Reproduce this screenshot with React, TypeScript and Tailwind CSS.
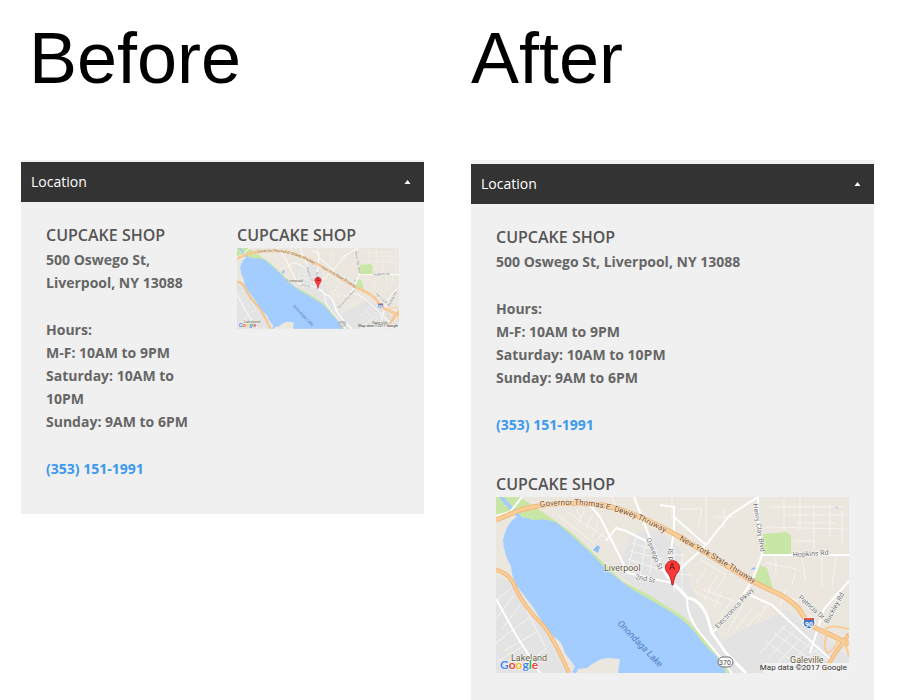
import { useId, useState, type ReactNode } from "react";

function StreetMap() {
  const id = useId();
  const governor = `${id}-governor`;
  const newYork = `${id}-newyork`;

  return (
    <svg
      viewBox="0 0 353 176"
      className="block w-full overflow-hidden"
      role="img"
      aria-label="Map of Liverpool, NY"
    >
      <defs>
        <path id={governor} d="M44 10 C70 7 90 7 110 12 S145 23 170 36" />
        <path id={newYork} d="M183 43 L224 66 L262 89" />
      </defs>

      <rect width="353" height="176" fill="#ebe7de" />

      {/* built-up areas */}
      <path
        d="M0 80 Q14 82 24 95 L47 128 L75 176 H0 Z"
        fill="#e3e3e3"
      />
      <path
        d="M134 38 L162 32 L184 52 L196 92 L214 120 L226 144 L248 132 L264 126 L290 113 L344 152 L353 160 V176 H226 L190 128 L118 74 L128 58 Z"
        fill="#e3e3e3"
      />

      {/* parks */}
      <path
        d="M0 0 H24 L48 16 L75 35 L110 68 L126 84 L153 98 L188 120 L210 144 L234 176 H222 L176 122 L120 88 L70 42 L40 24 L16 17 L0 20 Z"
        fill="#c8e6a5"
      />
      <path d="M267 37 L291 35 L295 39 V58 H267 Z" fill="#c8e6a5" />
      <path d="M264 68 L271 71 L277 92 L258 83 Z" fill="#c8e6a5" />

      {/* lake */}
      <path
        d="M19 21 Q10 28 7 43 Q8 58 15 69 Q16 84 24 93 L37 110 L47 126 L58 140 Q66 144 69 156 L81 172 L91 171 Q104 160 113 161 L124 162 L122 176 H230 L224 163 L207 146 L197 133 L184 121 L170 112 L151 101 L137 93 L121 81 L109 71 L94 55 L74 37 L61 26 Q51 21 37 23 Q28 19 19 21 Z"
        fill="#a3ccff"
      />
      <path d="M5 0 L25 22 M78 176 L81 170" stroke="#a3ccff" strokeWidth="4" />
      <path d="M97 53 L99 51 L101 48 L104 50 L102 56 Z" fill="#8fc0fa" />
      <path d="M254 73 L258 70 L261 72 Z M338 10 L341 9 L342 12 Z" fill="#8fc0fa" />

      {/* minor streets */}
      <g fill="none" stroke="#f6f4ef" strokeWidth="1">
        <path d="M62 18 L98 46 M70 14 L112 42 M80 12 L86 22 M88 14 L82 26 M96 18 L90 32 M103 24 L96 40 M108 34 L100 45 M116 0 L124 18 M176 0 V22 M184 12 H206 L202 30 M210 0 V38 M218 20 H240 M228 12 V32" />
        <path d="M136 46 L162 54 M134 54 L166 62 M132 62 L168 74 M140 40 L132 72 M150 44 L144 80 M158 48 L154 76 M172 58 H190 M170 66 H192 M174 76 L196 78 M178 52 V96 M186 56 V98" />
        <path d="M274 10 H348 M290 18 H350 M300 26 H340 M288 2 V32 M304 0 V34 M318 8 V44 M334 8 V40 M346 14 V48 M270 30 L350 32 M298 44 H318 V52 M204 62 L230 78 L218 96 M210 72 L200 86 M222 78 L212 94 M270 66 L300 72 L296 88 M280 60 V76 M306 62 L310 84 M326 60 V90 M340 60 L336 90" />
        <path d="M198 94 L226 108 M206 92 L238 104 M214 92 L208 104 M226 94 L218 110 M238 100 L224 120 M248 106 L232 134 M256 112 L240 132 M264 116 L250 130 M272 106 L262 124 M280 96 L302 104 M290 92 L284 108" />
        <path d="M264 156 L290 128 M272 162 L298 134 M280 168 L306 140 M288 172 L314 146 M296 174 L322 152 M270 144 L312 176 M278 136 L322 168 M286 130 L330 162" />
        <path d="M0 122 L18 98 M6 132 L24 108 M0 146 L34 120 M8 154 L42 134 M2 164 L26 150 M0 104 L14 92 M28 108 L50 152 L26 170" />
      </g>

      {/* main streets */}
      <g fill="none" stroke="#ffffff" strokeWidth="2" strokeLinejoin="round">
        <path d="M0 19 L14 15 L26 0 M94 8 L104 20 L126 64 L132 76 L176 86" />
        <path d="M110 44 L120 31 L130 34 L154 46 M138 0 L152 36 L158 54 L170 78 L178 88" />
        <path d="M164 8 L178 10 V34 L174 60 L177 84 M178 20 L210 48 M262 0 L234 18 L210 48 L180 76" />
        <path d="M262 0 V20 L266 58 L256 84 L236 114 L216 136" />
        <path d="M266 58 H353 M353 84 L328 112 L314 156 M254 98 L276 108 L334 162" />
        <path d="M176 86 Q188 96 191 101 Q205 102 212 122 L216 136 L230 156 L250 176" strokeWidth="3" />
        <path d="M191 101 Q190 118 204 136 L224 160 L236 176" />
        <path d="M0 102 L20 138 L44 176" />
      </g>

      {/* highways */}
      <g fill="none" strokeLinejoin="round">
        <g stroke="#f0b67a" strokeWidth="5">
          <path d="M0 23 L24 13 Q60 3 107 8 Q138 14 184 40 L254 83 L274 93 Q292 100 303 112 Q312 130 331 136 L353 147" />
          <path d="M0 73 Q14 76 20 92 Q28 110 46 127 Q56 138 73 176 M353 137 L338 158 L328 176" strokeWidth="4" />
        </g>
        <g stroke="#fbcf97" strokeWidth="3">
          <path d="M0 23 L24 13 Q60 3 107 8 Q138 14 184 40 L254 83 L274 93 Q292 100 303 112 Q312 130 331 136 L353 147" />
          <path d="M0 73 Q14 76 20 92 Q28 110 46 127 Q56 138 73 176 M353 137 L338 158 L328 176" strokeWidth="2" />
        </g>
        <path
          d="M331 136 Q326 128 344 130 L353 132 M331 136 Q326 152 332 156 Q344 148 341 140 Q352 148 353 160"
          stroke="#f9cd96"
          strokeWidth="2"
        />
      </g>

      {/* road names */}
      <g
        className="font-['Roboto',sans-serif] text-[8px]"
        fill="#74451b"
        stroke="#fff3df"
        strokeWidth="1"
        paintOrder="stroke"
      >
        <text>
          <textPath href={`#${governor}`}>Governor Thomas E. Dewey Thruway</textPath>
        </text>
        <text>
          <textPath href={`#${newYork}`}>New York State Thruway</textPath>
        </text>
      </g>
      <g
        className="font-['Roboto',sans-serif] text-[7px]"
        fill="#6e6e6e"
        stroke="#ffffff"
        strokeWidth="1"
        paintOrder="stroke"
      >
        <text transform="translate(257 7) rotate(81)">Henry Clay Blvd</text>
        <text transform="translate(297 60) rotate(-3)">Hopkins Rd</text>
        <text transform="translate(150 42) rotate(68)">Oswego St</text>
        <text transform="translate(176 70) rotate(-86)">3rd St</text>
        <text transform="translate(139 82) rotate(12)">2nd St</text>
        <text transform="translate(222 132) rotate(-47)">Electronics Pkwy</text>
        <text transform="translate(302 101) rotate(42)">Patricia Dr</text>
        <text transform="translate(332 127) rotate(-61)">Buckley Rd</text>
      </g>

      {/* place names */}
      <text
        transform="translate(121 127) rotate(46)"
        className="font-['Roboto',sans-serif] text-[9px] italic"
        fill="#4f7fc4"
      >
        Onondaga Lake
      </text>
      <g
        className="font-['Roboto',sans-serif] text-[9px]"
        fill="#5d5436"
        stroke="#ffffff"
        strokeWidth="1"
        paintOrder="stroke"
      >
        <text x="108" y="74">Liverpool</text>
        <text x="15" y="164">Lakeland</text>
        <text x="294" y="166">Galeville</text>
      </g>

      {/* route shields */}
      <rect x="222" y="160" width="15" height="10" rx="5" fill="#ffffff" stroke="#6c6c6c" />
      <text
        x="229"
        y="168"
        textAnchor="middle"
        className="font-['Roboto',sans-serif] text-[7px]"
        fill="#444444"
      >
        370
      </text>
      <path
        d="M308 121 H318 Q320 127 318 129 Q316 131 313 132 Q310 131 308 129 Q306 127 308 121 Z"
        fill="#4478c4"
        stroke="#ffffff"
        strokeWidth="1"
      />
      <path d="M308 121 H318 V123 H308 Z" fill="#d9534a" />
      <text
        x="313"
        y="130"
        textAnchor="middle"
        className="font-['Roboto',sans-serif] text-[7px] font-bold"
        fill="#ffffff"
      >
        90
      </text>

      {/* marker */}
      <path
        d="M176 88 Q175 79 171 75 A7 7 0 1 1 182 75 Q178 79 177 88 Z"
        fill="#fb3b3b"
        stroke="#c4161c"
        strokeWidth="1"
      />
      <text
        x="176"
        y="73"
        textAnchor="middle"
        className="font-['Roboto',sans-serif] text-[9px]"
        fill="#5b0b0b"
      >
        A
      </text>

      {/* attribution */}
      <text
        x="4"
        y="172"
        className="font-['Lato',sans-serif] text-[12px] font-bold"
        stroke="#ffffff"
        strokeWidth="1"
        paintOrder="stroke"
      >
        <tspan fill="#4285f4">G</tspan>
        <tspan fill="#ea4335">o</tspan>
        <tspan fill="#fbbc05">o</tspan>
        <tspan fill="#4285f4">g</tspan>
        <tspan fill="#34a853">l</tspan>
        <tspan fill="#ea4335">e</tspan>
      </text>
      <rect x="267" y="166" width="86" height="10" fill="#f5f5f5" fillOpacity="0.8" />
      <text
        x="351"
        y="173"
        textAnchor="end"
        className="font-['Roboto',sans-serif] text-[8px]"
        fill="#333333"
      >
        Map data ©2017 Google
      </text>
    </svg>
  );
}

function ShopDetails() {
  return (
    <section>
      <ShopTitle />
      <div className="flex flex-col gap-6 text-sm/[23px] font-bold text-[#666666]">
        <p>500 Oswego St, Liverpool, NY 13088</p>
        <div>
          <p>Hours:</p>
          <p>M-F: 10AM to 9PM</p>
          <p>Saturday: 10AM to 10PM</p>
          <p>Sunday: 9AM to 6PM</p>
        </div>
        <a href="tel:3531511991" className="text-[#3b99ef]">
          (353) 151-1991
        </a>
      </div>
    </section>
  );
}

function ShopTitle() {
  return (
    <h2 className="mb-px text-base/6 font-semibold text-[#555555]">
      CUPCAKE SHOP
    </h2>
  );
}

function LocationPanel({ children }: { children: ReactNode }) {
  const [open, setOpen] = useState(true);

  return (
    <>
      <button
        type="button"
        aria-expanded={open}
        onClick={() => setOpen(!open)}
        className="flex h-10 w-full items-center justify-between bg-[#333333] pr-[13px] pl-2.5 text-sm text-white"
      >
        Location
        <svg
          viewBox="0 0 7 4"
          className={open ? "h-1 w-[7px]" : "h-1 w-[7px] rotate-180"}
          aria-hidden="true"
        >
          <path d="M3.5 0 L6.5 4 H0.5 Z" fill="currentColor" />
        </svg>
      </button>
      {open && <div className="px-[25px] pt-[21px] pb-[34px]">{children}</div>}
    </>
  );
}

export default function App() {
  return (
    <main className="grid grid-cols-2 items-start gap-x-[47px] bg-white pt-[18px] pr-[26px] pl-[21px] font-['Open_Sans',sans-serif]">
      <div>
        <h1 className="mb-[62px] pl-2 font-['Liberation_Sans',sans-serif] text-[72px]/[80px] text-black">
          Before
        </h1>
        <div className="bg-[#f0f0f0] pt-0.5">
          <LocationPanel>
            <div className="grid grid-cols-2 gap-x-[29px]">
              <ShopDetails />
              <section>
                <ShopTitle />
                <StreetMap />
              </section>
            </div>
          </LocationPanel>
        </div>
      </div>

      <div>
        <h1 className="mb-[62px] font-['Liberation_Sans',sans-serif] text-[72px]/[80px] text-black">
          After
        </h1>
        <div className="bg-[#f0f0f0] pt-1">
          <LocationPanel>
            <div className="flex flex-col gap-9">
              <ShopDetails />
              <section>
                <ShopTitle />
                <StreetMap />
              </section>
            </div>
          </LocationPanel>
        </div>
      </div>
    </main>
  );
}
